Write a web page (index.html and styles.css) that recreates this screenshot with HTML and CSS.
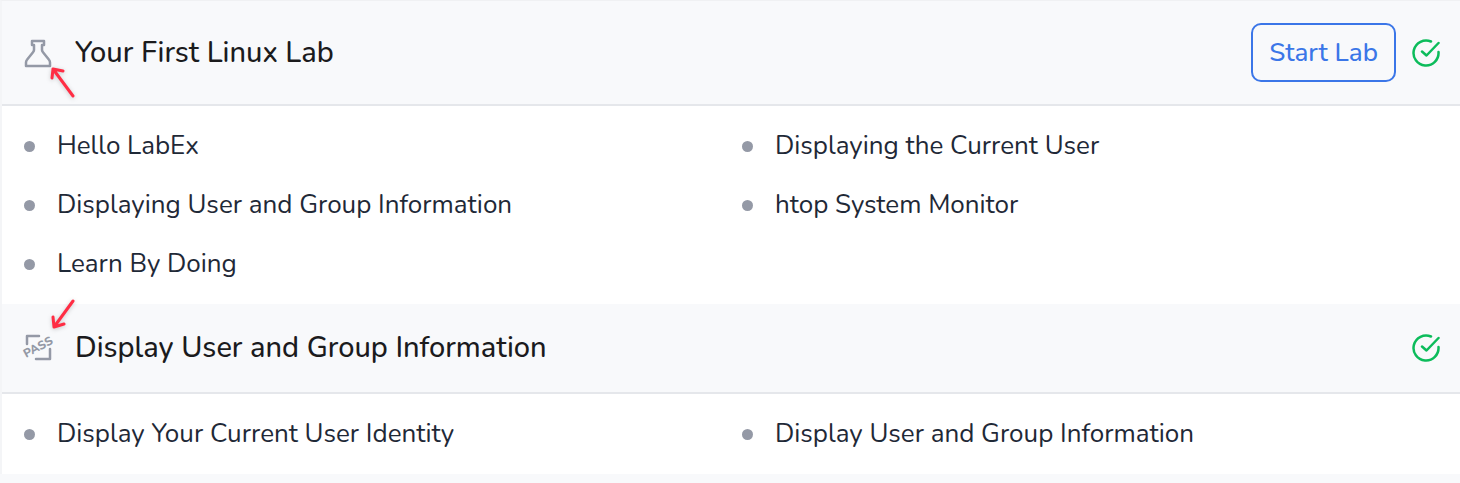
FILE: index.html
```html
<!DOCTYPE html>
<html lang="en">
  <head>
    <meta charset="UTF-8" />
    <meta name="viewport" content="width=device-width, initial-scale=1.0" />
    <title>Your First Linux Lab</title>
    <link rel="stylesheet" href="styles.css">
  </head>
  <body>
    <main class="course">
      <section class="lab">
        <header class="lab-header">
          <span class="lab-type">
            <svg class="icon" viewBox="0 0 28 28" aria-hidden="true">
              <path d="M8 2h12v4h-2v5q0 1 1 2.200l6 7.600q1 1.200 1 2.600v3.600H2v-3.600q0-1.400 1-2.600l6-7.600q1-1.200 1-2.200V6H8z" />
            </svg>
            <svg class="arrow arrow-up" viewBox="0 0 28 34" aria-hidden="true">
              <path d="M24 31L4 4M3 13L4 4l10 2" />
            </svg>
          </span>
          <h2 class="lab-title">Your First Linux Lab</h2>
          <button type="button" class="start-button">Start Lab</button>
          <svg class="check" viewBox="0 0 28 28" role="img" aria-label="Completed">
            <path d="M19 2.500A12.500 12.500 0 1 0 26.500 13M10 12.500l4.500 4L26.500 4" />
          </svg>
        </header>
        <ul class="steps">
          <li>Hello LabEx</li>
          <li>Displaying the Current User</li>
          <li>Displaying User and Group Information</li>
          <li>htop System Monitor</li>
          <li>Learn By Doing</li>
        </ul>
      </section>

      <section class="lab">
        <header class="lab-header">
          <span class="lab-type">
            <svg class="icon" viewBox="0 0 28 28" aria-hidden="true">
              <path d="M3 10V2h12M26 15v10H12" />
              <text class="pass" x="14" y="17" transform="rotate(-28 14 13)">PASS</text>
            </svg>
            <svg class="arrow arrow-down" viewBox="0 0 28 34" aria-hidden="true">
              <path d="M24 4L5 30M4 20l1 10 10-3" />
            </svg>
          </span>
          <h2 class="lab-title">Display User and Group Information</h2>
          <svg class="check" viewBox="0 0 28 28" role="img" aria-label="Completed">
            <path d="M19 2.500A12.500 12.500 0 1 0 26.500 13M10 12.500l4.500 4L26.500 4" />
          </svg>
        </header>
        <ul class="steps">
          <li>Display Your Current User Identity</li>
          <li>Display User and Group Information</li>
        </ul>
      </section>
    </main>
  </body>
</html>
```
FILE: styles.css
```css
* {
    box-sizing: border-box;
}

body {
    margin: 0;
    background-color: #f8f9fb;
    font-family: Nunito, Lato, sans-serif;
    color: #1f2937;
}

.course {
    border-top: 1px solid #f0f1f3;
    border-left: 2px solid #f4f5f7;
}

.lab-header {
    display: flex;
    align-items: center;
    min-height: 90px;
    padding: 22px 20px 22px 22px;
    border-bottom: 2px solid #e5e7eb;
    background-color: #f8f9fb;
}

.lab-type {
    position: relative;
    flex: none;
    width: 28px;
    height: 28px;
    margin-right: 23px;
}

.icon {
    display: block;
    width: 28px;
    height: 28px;
    overflow: visible;
    fill: none;
    stroke: #9499a6;
    stroke-width: 2.500;
    stroke-linejoin: round;
    stroke-linecap: round;
}

.pass {
    fill: #9499a6;
    stroke: none;
    font-size: 12px;
    font-weight: 800;
    text-anchor: middle;
}

.arrow {
    position: absolute;
    left: 25px;
    width: 28px;
    height: 34px;
    fill: none;
    stroke: #ff2d44;
    stroke-width: 3;
    stroke-linecap: round;
    stroke-linejoin: round;
    filter: drop-shadow(0 1px 2px rgba(0, 0, 0, 0.2));
}

.arrow-up {
    top: 26px;
}

.arrow-down {
    bottom: 31px;
}

.lab-title {
    flex: 1;
    margin: 0;
    font-size: 29px;
    line-height: 36px;
    font-weight: 500;
    color: #1b1b1d;
}

.start-button {
    height: 59px;
    padding: 0 16px;
    border: 2px solid #3b76e8;
    border-radius: 10px;
    background: transparent;
    font-family: inherit;
    font-size: 26px;
    font-weight: 500;
    color: #3b76e8;
    cursor: pointer;
}

.check {
    flex: none;
    width: 28px;
    height: 28px;
    margin-left: 16px;
    fill: none;
    stroke: #0cbc5b;
    stroke-width: 2.500;
    stroke-linecap: round;
    stroke-linejoin: round;
}

.steps {
    display: grid;
    grid-template-columns: 1fr 1fr;
    gap: 19px 22px;
    margin: 0;
    padding: 20px 22px;
    list-style: none;
    background-color: #ffffff;
}

.steps li {
    display: flex;
    align-items: center;
    font-size: 26px;
    line-height: 40px;
}

.steps li::before {
    content: "";
    flex: none;
    width: 11px;
    height: 11px;
    margin-right: 22px;
    border-radius: 50%;
    background-color: #9499a6;
}
```
